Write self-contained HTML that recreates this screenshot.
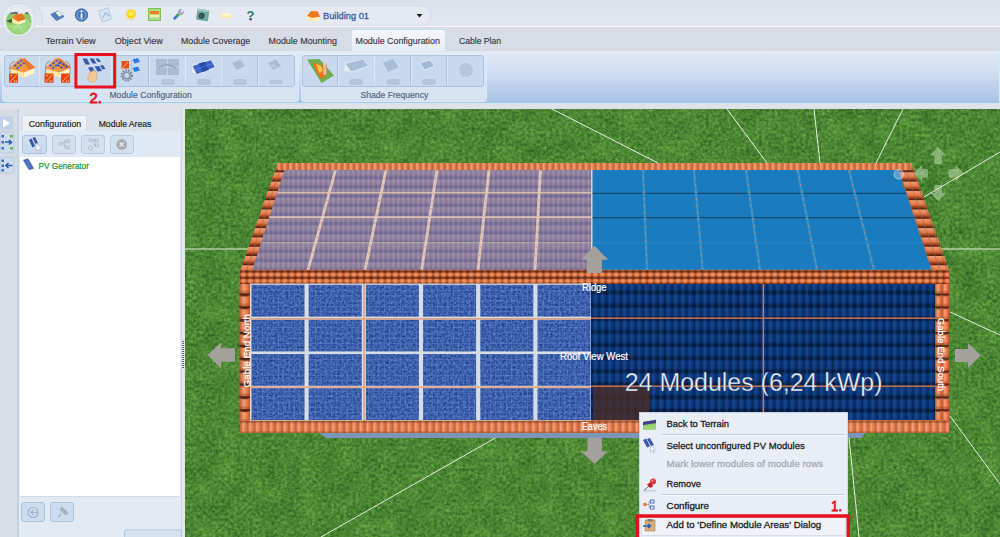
<!DOCTYPE html>
<html><head><meta charset="utf-8">
<style>
*{margin:0;padding:0;box-sizing:border-box}
html,body{width:1000px;height:537px;overflow:hidden;background:#dfe2e8;font-family:"Liberation Sans",sans-serif}
.a{position:absolute}
svg.a{overflow:visible}
#qat{left:0;top:0;width:1000px;height:26px;background:linear-gradient(#dbe0ea,#e2e6ef)}
#qatbar{left:28px;top:5px;width:405px;height:21px;background:linear-gradient(#e4e8f0,#e3e7f0);border:1px solid #d3d8e2;border-bottom:none;border-radius:0 11px 0 0}
#qatline{left:0;top:26px;width:1000px;height:1px;background:#f5f7fa}
#tabrow{left:0;top:27px;width:1000px;height:24px;background:#d8dce5}
.tab{position:absolute;top:36px;font-size:9.2px;color:#3c3c46;white-space:nowrap;letter-spacing:0}
#acttab{left:351px;top:28.5px;width:95px;height:23px;background:linear-gradient(#f4f7fb,#e6edf6);border:1px solid #c5e2f2;border-bottom:none;border-radius:3px 3px 0 0}
#ribbon{left:0;top:51px;width:1000px;height:53px;background:linear-gradient(#e3ecf7,#cddcf0 45%,#a7c2e6);border-right:1px solid #c8f0fa}
#ribline{left:0;top:102px;width:1000px;height:2px;background:linear-gradient(#afc6e2 0 50%,#c8eaf6 50% 100%)}
.grp{position:absolute;top:51px;height:51px;background:linear-gradient(#e2ebf6,#d6e2f1);border:1px solid #dde8f4;border-radius:3px}
.bgrp{position:absolute;top:55px;height:31.5px;background:#c9d9ee;border:1px solid #a8c2e2;border-radius:3px}
.div{position:absolute;top:56px;width:1.5px;height:29.5px;background:#a9c2e1;border-right:1px solid #dbe7f4}
.glabel{position:absolute;top:90px;font-size:9.2px;color:#5a6a80;white-space:nowrap}
.pill{position:absolute;width:14px;height:6px;border-radius:3px;background:#b5c6da}
.menu{font-size:9.6px;color:#1e1e28;white-space:nowrap;position:absolute;left:666.5px}
</style></head><body>

<div id="qat" class="a"></div>
<svg class="a" style="left:0;top:0" width="440" height="27" viewBox="0 0 440 27"><path d="M37.7 5.5 L421.5 5.5 A10.6 10.3 0 0 1 421.5 26 L41.8 26 A24 24 0 0 0 37.7 5.5Z" fill="#e5e9f1" stroke="#d2d7e0" stroke-width="0.9"/></svg>
<div id="qatline" class="a"></div>
<div id="tabrow" class="a"></div>
<!-- app button -->
<svg class="a" style="left:0;top:0" width="40" height="40" viewBox="0 0 40 40">
 <defs><clipPath id="disc"><path d="M6.2 22 A12.6 12.6 0 0 0 31.4 22 A12.6 12.6 0 0 0 29.5 14.2 L8 14.2 A12.6 12.6 0 0 0 6.2 22Z"/></clipPath>
 <radialGradient id="discg" cx="0.5" cy="0.6" r="0.6"><stop offset="0" stop-color="#a6dc88"/><stop offset="1" stop-color="#7cc45a"/></radialGradient></defs>
 <circle cx="18.6" cy="20.1" r="16.8" fill="#e5e9f0" stroke="#d0d6de" stroke-width="0.9"/>
 <path d="M8.5 15 Q10 11.5 13 12.3 Q16 11 18 12.5 L18 14.5 L8.5 14.5Z" fill="#4f5a58" opacity="0.85"/>
 <path d="M24.5 14.5 Q25.5 11.5 27.5 12.2 Q29 13 29.2 14.5Z" fill="#4f5a58" opacity="0.85"/>
 <g clip-path="url(#disc)">
  <rect x="0" y="10" width="40" height="30" fill="url(#discg)"/>
  <g stroke="#d4f0c4" stroke-width="0.6" fill="none" opacity="0.8"><path d="M5 25 Q18 30 33 23"/><path d="M10 33 L18 24 L24 34"/><path d="M24 17 L31 26"/></g>
 </g>
 <polygon points="6.2,21 11.8,18.8 12.4,22.8 9.6,22.6" fill="#2e4a26" opacity="0.85"/>
 <polygon points="11.8,18 14.9,14.9 18.2,21.4 18,24.4 12.4,22.8" fill="#fbeab0"/>
 <polygon points="18.2,21.4 25.5,19.1 25,22.5 18,24.4" fill="#fff4cc"/>
 <polygon points="11.8,18 14.9,14.9 21.9,13.5 25.5,19.1 18.2,21.4" fill="#ee8228"/>
 <polygon points="14.9,14.9 21.9,13.5 25.5,19.1 18.2,21.4" fill="#e87420"/>
</svg>
<!-- QAT icons -->
<svg class="a" style="left:0;top:0" width="440" height="27" viewBox="0 0 440 27">
 <polygon points="50.8,14 58,10.5 64,16 56.5,20" fill="#4d7cc0"/>
 <polygon points="50.8,14 56.5,20 56.5,21 50.8,15" fill="#2e5590"/>
 <polygon points="56.5,20 64,16 64,17 56.5,21" fill="#3a68a8"/>
 <polygon points="55.5,12.5 58.5,11 62.5,15 59.2,16.8" fill="#eef4dc"/>
 <polygon points="52.5,14 54.5,13 56,14.5 54,15.5" fill="#6a7a8a"/>
 <circle cx="81.5" cy="15" r="6.2" fill="#4577bb" stroke="#2f5a98" stroke-width="0.8"/>
 <circle cx="81.5" cy="15" r="4.6" fill="none" stroke="#a9c4e6" stroke-width="0.7"/>
 <rect x="80.7" y="13.5" width="1.7" height="5" fill="#fff"/><circle cx="81.5" cy="11.5" r="1" fill="#fff"/>
 <g transform="translate(105,15) rotate(-20)"><rect x="-5" y="-6" width="10" height="12" fill="#d6e3ef" stroke="#b4c7da" stroke-width="0.8"/><path d="M-3 2 L1 -2 L4 3" stroke="#9ab6d1" fill="none"/></g>
 <g fill="#f0d040"><circle cx="126" cy="12" r="0.6"/><circle cx="125.5" cy="14.5" r="0.6"/><circle cx="126" cy="17" r="0.6"/><circle cx="127.5" cy="19" r="0.6"/><circle cx="130" cy="20.2" r="0.6"/><circle cx="132.5" cy="20" r="0.6"/><circle cx="134.5" cy="19.5" r="0.6"/></g>
 <circle cx="131.2" cy="14" r="4.6" fill="#fbd20c"/><circle cx="131.2" cy="13.5" r="2.8" fill="#ffe84a"/>
 <rect x="148" y="8" width="13" height="13" fill="#7cc257"/><rect x="149" y="9" width="11" height="11" fill="#a9dc8c"/>
 <rect x="150" y="11" width="9" height="3.5" fill="#ee7a2a"/><rect x="150" y="14.5" width="9" height="2.8" fill="#fbf0b0"/>
 <g transform="translate(178,15) rotate(45)"><rect x="-1.3" y="-1" width="2.6" height="7" rx="1" fill="#3a7ad0"/><rect x="-1.3" y="-2" width="2.6" height="4" fill="#4a9a60"/><circle cx="0" cy="-4" r="3" fill="#a8adb5"/><rect x="-1" y="-7.5" width="2" height="3" fill="#e3e7f0"/></g>
 <g transform="translate(202.7,15) rotate(8)"><rect x="-6" y="-5.5" width="12" height="11" rx="1" fill="#6fa89e"/><rect x="-6" y="-5.5" width="12" height="2" fill="#9fd0c4"/><circle cx="-1" cy="1" r="3" fill="#2a4a4a"/><circle cx="-1" cy="1" r="1.3" fill="#567"/></g>
 <g transform="translate(226,15.8)"><polygon points="-6,-1 -2,-3.2 6,-1.5 6,1.5 2,3 -6,1" fill="#fbeaa8"/><polygon points="-6,-1 -2,-3.2 6,-1.5 2,0.5" fill="#fff6d0"/></g>
 <text x="246.5" y="20" font-size="13" font-weight="bold" fill="#2d7a6a" font-family="Liberation Sans">?</text>
 <circle cx="250.8" cy="19.3" r="1.2" fill="#2a5ac8"/>
 <g transform="translate(313,16)"><polygon points="-6,0 -2,-5 5,-4.5 7,1 -1,2" fill="#ee7a22"/><polygon points="-6,0 -1,2 0,5.5 -5,4" fill="#fbeaa0"/><polygon points="-1,2 7,1 6.5,4.5 0,5.5" fill="#fff2c0"/></g>
 <text x="323" y="19.2" font-size="9.8" fill="#3a5a9e" stroke="#3a5a9e" stroke-width="0.3" font-family="Liberation Sans" textLength="46" lengthAdjust="spacingAndGlyphs">Building 01</text>
 <polygon points="416.5,14 422.5,14 419.5,17.5" fill="#1a1a1a"/>
</svg>
<!-- tabs -->
<div id="acttab" class="a"></div>
<svg class="a" style="left:0;top:0" width="1000" height="60" viewBox="0 0 1000 60" font-family="Liberation Sans" font-size="9" fill="#383844" stroke="#383844" stroke-width="0.15">
 <text x="45.5" y="44.4" textLength="50.2" lengthAdjust="spacingAndGlyphs">Terrain View</text>
 <text x="114.8" y="44.4" textLength="48.1" lengthAdjust="spacingAndGlyphs">Object View</text>
 <text x="181" y="44.4" textLength="69.2" lengthAdjust="spacingAndGlyphs">Module Coverage</text>
 <text x="268.5" y="44.4" textLength="68.4" lengthAdjust="spacingAndGlyphs">Module Mounting</text>
 <text x="355.5" y="44.4" textLength="84.4" lengthAdjust="spacingAndGlyphs">Module Configuration</text>
 <text x="459" y="44.4" textLength="42.1" lengthAdjust="spacingAndGlyphs">Cable Plan</text>
</svg>
<!-- ribbon -->
<div id="ribbon" class="a"></div>
<div id="ribline" class="a"></div>
<div class="grp" style="left:2px;width:297px"></div>
<div class="grp" style="left:300.5px;width:186.5px"></div>
<div class="bgrp" style="left:4.2px;width:290.5px"></div>
<div class="bgrp" style="left:302.3px;width:181.5px"></div>
<div class="div" style="left:38.8px"></div>
<div class="div" style="left:73.5px"></div>
<div class="div" style="left:110.8px"></div>
<div class="div" style="left:148.4px"></div>
<div class="div" style="left:184.7px"></div>
<div class="div" style="left:220.8px"></div>
<div class="div" style="left:257px"></div>
<div class="div" style="left:337px"></div>
<div class="div" style="left:373.5px"></div>
<div class="div" style="left:410.2px"></div>
<div class="div" style="left:446.3px"></div>

<svg class="a" style="left:0;top:0" width="500" height="110" viewBox="0 0 500 110" font-family="Liberation Sans" font-size="9" fill="#52607a" stroke="#52607a" stroke-width="0.15">
 <text x="109.4" y="98" textLength="82.4" lengthAdjust="spacingAndGlyphs">Module Configuration</text>
 <text x="360.6" y="98" textLength="67.6" lengthAdjust="spacingAndGlyphs">Shade Frequency</text>
</svg>
<div class="pill" style="left:160.5px;top:78.5px"></div>
<div class="pill" style="left:196.5px;top:78.5px"></div>
<div class="pill" style="left:232.5px;top:78.5px"></div>
<div class="pill" style="left:269px;top:78.5px;height:4px;top:79.5px"></div>
<div class="pill" style="left:349px;top:78.5px"></div>
<div class="pill" style="left:385.5px;top:78.5px"></div>
<div class="pill" style="left:422px;top:78.5px"></div>
<svg class="a" style="left:0;top:0" width="500" height="110" viewBox="0 0 500 110">
 <!-- icon1 house -->
 <g id="house1">
  <polygon points="11,68 24,72 24,77.5 11,73.5" fill="#fbe7a4"/>
  <polygon points="24,72 34.5,67.5 34.5,73 24,77.5" fill="#fff4cc"/>
  <polygon points="9,68.5 20,58.3 24.5,58.3 35.5,67.8 24,72.5" fill="#f49648"/>
  <polygon points="24.5,58.3 35.5,67.8 28.5,69.6 22.5,59.5" fill="#e87a30"/>
  <path d="M10 74 L10 66 Q11 61.5 15 61" stroke="#80838a" stroke-width="0.8" fill="none"/>
  <rect x="9" y="73.5" width="9" height="9.2" fill="#e2480f"/>
  <path d="M10 82 L17 74.5" stroke="#ffd8c0" stroke-width="0.7"/>
  <rect x="10.3" y="75" width="2" height="0.7" fill="#ffd8c0"/><rect x="14" y="80.5" width="1.2" height="1" fill="#ffd8c0"/><rect x="15.8" y="80.5" width="1.2" height="1" fill="#ffd8c0"/>
 </g>
 <g fill="#3a64d0">
  <polygon points="13.5,65.5 15.5,64 16.8,65.5 14.8,67"/><polygon points="16.5,63 18.5,61.5 19.8,63 17.8,64.5"/><polygon points="19.5,60.5 21.5,59.5 22.8,61 20.8,62"/>
  <polygon points="16,68 18,66.5 19.3,68 17.3,69.5"/><polygon points="19,65.5 21,64 22.3,65.5 20.3,67"/><polygon points="22,63 24,62 25.3,63.5 23.3,64.5"/>
 </g>
 <use href="#house1" x="35.5"/>
 <g fill="#3a64d0" transform="translate(35.5,0)">
  <polygon points="13.5,65.5 15.5,64 16.8,65.5 14.8,67"/><polygon points="16.5,63 18.5,61.5 19.8,63 17.8,64.5"/><polygon points="19.5,60.5 21.5,59.5 22.8,61 20.8,62"/>
  <polygon points="16,68 18,66.5 19.3,68 17.3,69.5"/><polygon points="19,65.5 21,64 22.3,65.5 20.3,67"/><polygon points="22,63 24,62 25.3,63.5 23.3,64.5"/>
 </g>
 <g fill="#2f54b8"><polygon points="60,61 62,62.5 61,64 59,62.5"/><polygon points="63,63 65,64.5 64,66 62,64.5"/><polygon points="66,65 68,66.5 67,68 65,66.5"/><polygon points="58,64 60,65.5 59,67 57,65.5"/><polygon points="61,66 63,67.5 62,69 60,67.5"/></g>
 <path d="M70 74 L70 66 Q69 61.5 65 61" stroke="#80838a" stroke-width="0.8" fill="none"/>
 <rect x="61" y="73.5" width="9" height="9.2" fill="#e2480f"/>
 <path d="M62 82 L69 74.5" stroke="#ffd8c0" stroke-width="0.7"/>
 <rect x="66" y="80.5" width="1.2" height="1" fill="#ffd8c0"/><rect x="67.8" y="80.5" width="1.2" height="1" fill="#ffd8c0"/>
 <!-- icon3 panels + hand -->
 <g fill="#3658a8">
  <polygon points="82.5,58.5 87,58.5 90,64.5 85.5,64.5"/><polygon points="89.5,58.5 93.5,58.5 96.5,63.5 92.5,63.5"/><polygon points="95.5,58.5 98.5,58.5 101,62 98,62"/>
  <polygon points="88,67.5 92.5,67 95.5,72.5 91,73"/><polygon points="94.5,66.5 99,66 102,71 97.5,71.5"/><polygon points="100,65.5 103,65 105.5,69 102.5,69.5"/>
 </g>
 <path d="M88 80 Q87 76 89 75 L90 72 Q91 71 92 72 L92.5 70.5 Q93.5 70 94 71 L95 71.5 Q96 71 96.5 72 L97 77 Q97 82 93 82 Q89.5 82 88 80Z" fill="#f3c896" stroke="#c89a66" stroke-width="0.5"/>
 <!-- icon4 -->
 <rect x="121.5" y="61" width="7.5" height="7.5" fill="#e84e14"/><path d="M122.5 68 L128 62" stroke="#fbd0b0" stroke-width="0.7"/>
 <path d="M129 64.5 L132 64.5 M131.5 60 L131.5 70" stroke="#b8bcc4" stroke-width="0.8"/>
 <polygon points="132.5,59.5 138,58 140,62 134.5,63.5" fill="#2f7ae0"/>
 <polygon points="132.5,68 138,66.5 140,70.5 134.5,72" fill="#2f7ae0"/>
 <circle cx="126.8" cy="75.5" r="5" fill="none" stroke="#7a8a98" stroke-width="2.4" stroke-dasharray="1.6 1.1"/>
 <circle cx="126.8" cy="75.5" r="3.2" fill="none" stroke="#8a9aa6" stroke-width="1.6"/>
 <!-- icon5 faded -->
 <rect x="156" y="59" width="23" height="16" fill="#a9bdd2"/><rect x="167" y="59" width="1" height="16" fill="#c8d6e6"/><rect x="156" y="66.5" width="23" height="1" fill="#c8d6e6"/>
 <path d="M158 68 Q167 62 176 68" stroke="#8fa6c0" stroke-width="1.3" fill="none"/>
 <!-- icon6 solar panel on stand -->
 <polygon points="191.3,65.7 196.6,74.8 191.3,72.5" fill="#eef2f6" stroke="#aab6c4" stroke-width="0.5"/>
 <polygon points="192,65.7 211,59.6 215.6,67.2 196.6,74.8" fill="#3f64c8" stroke="#f4f6fa" stroke-width="0.9"/>
 <polygon points="198.5,63.6 204.5,61.7 209,69.8 202.5,72.2" fill="#2a4aa8"/>
 <path d="M194.3 69.7 L213.3 63.4" stroke="#6f8ee0" stroke-width="0.5"/>
 <!-- icon7, icon8 faded -->
 <polygon points="232,63 240,59.5 245,66 237,70" fill="#a9bdd2"/>
 <polygon points="268,63 276,59.5 281,66 273,70" fill="#a9bdd2"/>
 <text x="270.5" y="67" font-size="5" fill="#d6e2ee" transform="rotate(-20 274 65)">%</text>
 <!-- shade freq icons -->
 <polygon points="307,59.5 319.5,59 334,75.5 321.5,83" fill="#6fae4e"/>
 <path d="M313 63 Q322 62 326 73 Q324 78 321 79 Q315 70 313 63Z" fill="#f07018"/>
 <path d="M316 64 Q321 64 323 70 Q321 73 319 73Z" fill="#fbc040"/>
 <rect x="323" y="64" width="3.8" height="11" fill="#eebb90" stroke="#c07850" stroke-width="0.5"/>
 <ellipse cx="324.9" cy="64" rx="1.9" ry="0.8" fill="#f8d8b8"/>
 <polygon points="345,63.5 363,59 368.5,66 351,72" fill="#a7bcd6" stroke="#eef3f8" stroke-width="0.7"/>
 <polygon points="345,63.5 351,72 344,71" fill="#e4ecf4"/>
 <polygon points="383,63 393,59 398.5,67 388,72" fill="#a7bcd6"/>
 <polygon points="420,63 430,60 434.5,66 424.5,70" fill="#a2b8d4" stroke="#eef3f8" stroke-width="0.7"/>
 <circle cx="466" cy="70" r="7" fill="#b3c6de"/>
 <circle cx="466" cy="70" r="9.5" fill="none" stroke="#c3d2e4" stroke-width="0.8" stroke-dasharray="0.8 2"/>
 <!-- red box 2 -->
 <rect x="75.9" y="54.5" width="38.8" height="32.5" fill="none" stroke="#e8101c" stroke-width="3"/>
 <text x="89.6" y="102.6" font-size="15.5" fill="#e8101c" stroke="#e8101c" stroke-width="0.8" font-family="Liberation Sans" textLength="12.4" lengthAdjust="spacingAndGlyphs">2.</text>
</svg>

<!-- left strip -->
<div class="a" style="left:0;top:109px;width:18px;height:428px;background:#d6dce4"></div>
<div class="a" style="left:17px;top:109px;width:2px;height:428px;background:#c4d2e2"></div>
<svg class="a" style="left:0;top:109px" width="19" height="70" viewBox="0 109 19 70">
 <rect x="0" y="116.5" width="13" height="13" fill="#c0d2ea"/>
 <polygon points="3,119 3,127.5 10,123.2" fill="#fff"/>
 <rect x="0" y="132" width="14" height="21" rx="2" fill="#cfdcec" stroke="#b4c8e0" stroke-width="0.8"/>
 <g fill="#3a6ac0"><rect x="1.5" y="135" width="2.5" height="2.5"/><rect x="1.5" y="141" width="2.5" height="2.5"/><rect x="1.5" y="147" width="2.5" height="2.5"/></g>
 <g fill="#5cb84a"><rect x="10" y="135" width="3" height="2.5"/><rect x="10" y="147" width="3" height="2.5"/></g>
 <path d="M5 142 L11 142 M9 140 L11.5 142.2 L9 144.5" stroke="#2a5ab0" stroke-width="1.6" fill="none"/>
 <rect x="0" y="157" width="14" height="16" rx="2" fill="#cfdcec" stroke="#b4c8e0" stroke-width="0.8"/>
 <g fill="#3a6ac0"><rect x="1.5" y="159.5" width="2.5" height="2.5"/><rect x="1.5" y="164.5" width="2.5" height="2.5"/><rect x="1.5" y="169" width="2.5" height="2.5"/></g>
 <path d="M12.5 165.5 L6 165.5 M8.5 163 L6 165.5 L8.5 168" stroke="#2a5ab0" stroke-width="1.6" fill="none"/>
</svg>
<!-- left panel -->
<div class="a" style="left:19px;top:109px;width:162px;height:22px;background:#dde3ea"></div>
<div class="a" style="left:22.4px;top:115px;width:64.6px;height:16px;background:linear-gradient(#f2f5f9,#e9eef5);border:1px solid #d3d9e1;border-bottom:none;border-radius:2px 2px 0 0"></div>

<div class="a" style="left:158px;top:118px;width:1px;height:12px;background:#e6eaf0"></div>
<div class="a" style="left:19px;top:131px;width:162px;height:406px;background:#e3eaf4"></div>
<div class="a" style="left:20px;top:156.5px;width:160px;height:340px;background:#fff;border-bottom:1.5px solid #d3dae3"></div>
<div class="a" style="left:19px;top:131px;width:162px;height:25.5px;background:#e1e9f4"></div>
<div class="a" style="left:22.4px;top:134.5px;width:24.6px;height:19.8px;background:#cddcef;border:1px solid #a9c2e0;border-radius:3px"></div>
<div class="a" style="left:51.9px;top:134.5px;width:23.8px;height:19.8px;background:#d2e0f0;border:1px solid #b6cce6;border-radius:3px"></div>
<div class="a" style="left:81px;top:134.5px;width:23.5px;height:19.8px;background:#d2e0f0;border:1px solid #b6cce6;border-radius:3px"></div>
<div class="a" style="left:109.8px;top:134.5px;width:23.8px;height:19.8px;background:#d2e0f0;border:1px solid #b6cce6;border-radius:3px"></div>
<svg class="a" style="left:0;top:0" width="185" height="180" viewBox="0 0 185 180">
 <polygon points="29,140 31.5,138.5 35,146 32.5,147.5" fill="#34559c"/>
 <polygon points="32.5,138 35,137 38,143 35.5,144" fill="#34559c"/>
 <path d="M36 143 L36 151 L38 149.5 L39.5 152.5 L40.5 152 L39.2 149 L41.5 149 Z" fill="#fff" stroke="#8a96a6" stroke-width="0.5"/>
 <g stroke="#a8bad0" stroke-width="0.8" fill="none"><rect x="59.5" y="142.5" width="3" height="2.5"/><rect x="66" y="140" width="3" height="2.5"/><rect x="66" y="146" width="3" height="2.5"/><path d="M62.5 143.7 L64.5 143.7 L64.5 141.2 L66 141.2 M64.5 143.7 L64.5 147.2 L66 147.2"/></g>
 <g stroke="#a8bad0" stroke-width="0.8" fill="none"><rect x="89" y="139" width="3" height="2.5"/><rect x="95.5" y="139" width="3" height="2.5"/><rect x="95.5" y="144" width="3" height="2.5"/><path d="M92 140.2 L95.5 140.2 M94 140.2 L94 145.2 L95.5 145.2"/><circle cx="90.5" cy="148" r="2"/></g>
 <circle cx="121.7" cy="144.4" r="5.3" fill="#a8acb2"/>
 <path d="M119.6 142.3 L123.8 146.5 M123.8 142.3 L119.6 146.5" stroke="#e8eaee" stroke-width="1.3"/>
 <polygon points="23,160 28,158.5 34,168.5 29,170" fill="#3a5fae" stroke="#8ea6cc" stroke-width="0.6"/>
 <polygon points="24.5,161 27.5,160 32,167.5 29,168.5" fill="#4d78c8"/>
</svg>

<div class="a" style="left:19px;top:156.5px;width:162px;height:337.5px;background:transparent"></div>
<div class="a" style="left:181px;top:109px;width:4px;height:428px;background:#e3e7ed;border-left:1px solid #cfd6de"></div>

<svg class="a" style="left:0;top:100px" width="185" height="80" viewBox="0 100 185 80" font-family="Liberation Sans" font-size="9.2">
 <text x="28.7" y="127.4" textLength="52.6" lengthAdjust="spacingAndGlyphs" fill="#1e1e1e" stroke="#1e1e1e" stroke-width="0.18">Configuration</text>
 <text x="98.7" y="127.4" textLength="52.7" lengthAdjust="spacingAndGlyphs" fill="#1e1e1e" stroke="#1e1e1e" stroke-width="0.18">Module Areas</text>
 <text x="38.5" y="169.1" textLength="50.4" lengthAdjust="spacingAndGlyphs" fill="#12921e" stroke="#12921e" stroke-width="0.2">PV Generator</text>
</svg>
<div class="a" style="left:20.9px;top:502.4px;width:24.1px;height:19.8px;background:#cddcef;border:1px solid #a9c2e0;border-radius:3px"></div>
<div class="a" style="left:50.4px;top:502.4px;width:23.7px;height:19.8px;background:#cddcef;border:1px solid #a9c2e0;border-radius:3px"></div>
<svg class="a" style="left:0;top:490px" width="185" height="47" viewBox="0 490 185 47">
 <circle cx="33" cy="512.5" r="5" fill="none" stroke="#9fb4cc" stroke-width="1.2"/>
 <path d="M31 512.5 L38 512.5 M33.5 510 L31 512.5 L33.5 515" stroke="#9fb4cc" stroke-width="1.2" fill="none"/>
 <path d="M58 517 L61 514 M60 509 L66 515 M62 507.5 L67.5 513 L65 514 L61 510Z" stroke="#9fb4cc" stroke-width="1.5" fill="#9fb4cc"/>
 <rect x="124.5" y="529.8" width="57" height="9" rx="2" fill="#d5e1ef" stroke="#a9c2e0" stroke-width="0.9"/>
</svg>
<svg class="a" style="left:181px;top:340px" width="4" height="30" viewBox="0 0 4 30">
 <g fill="#202020"><rect x="1.5" y="1" width="1.2" height="1"/><rect x="1.5" y="3" width="1.2" height="1"/><rect x="1.5" y="5" width="1.2" height="1"/><rect x="1.5" y="7" width="1.2" height="1"/><rect x="1.5" y="9" width="1.2" height="1"/><rect x="1.5" y="11" width="1.2" height="1"/><rect x="1.5" y="13" width="1.2" height="1"/><rect x="1.5" y="15" width="1.2" height="1"/><rect x="1.5" y="17" width="1.2" height="1"/><rect x="1.5" y="19" width="1.2" height="1"/><rect x="1.5" y="21" width="1.2" height="1"/><rect x="1.5" y="23" width="1.2" height="1"/><rect x="1.5" y="25" width="1.2" height="1"/><rect x="1.5" y="27" width="1.2" height="1"/></g>
</svg>
<!-- 3D view -->
<svg class="a" style="left:0;top:0" width="1000" height="537" viewBox="0 0 1000 537">
<defs>
<filter id="grassf" x="0" y="0" width="100%" height="100%" color-interpolation-filters="sRGB">
 <feTurbulence type="fractalNoise" baseFrequency="0.32" numOctaves="3" seed="11" result="n1"/>
 <feTurbulence type="fractalNoise" baseFrequency="0.05" numOctaves="2" seed="4" result="n2"/>
 <feComposite in="n1" in2="n2" operator="arithmetic" k1="0" k2="0.7" k3="0.3" k4="0" result="n"/>
 <feColorMatrix in="n" type="matrix" values="0.42 0 0 0 0.0880  0.48 0 0 0 0.2894  0.25 0 0 0 0.0789  0 0 0 0 1" result="c"/>
 <feGaussianBlur in="c" stdDeviation="0.6"/>
</filter>
<filter id="panelf" x="0" y="0" width="100%" height="100%" color-interpolation-filters="sRGB">
 <feTurbulence type="fractalNoise" baseFrequency="0.45" numOctaves="2" seed="5" result="n"/>
 <feColorMatrix in="n" type="matrix" values="0.38 0 0 0 0.03  0.42 0 0 0 0.145  0.36 0 0 0 0.48  0 0 0 0 1" result="c"/>
 <feComposite in="c" in2="SourceAlpha" operator="in"/>
</filter>
<linearGradient id="topShade" x1="0" y1="0" x2="0" y2="1"><stop offset="0" stop-color="#4a1e0c" stop-opacity="0.55"/><stop offset="1" stop-color="#4a1e0c" stop-opacity="0"/></linearGradient>
<pattern id="pgrid" width="5.3" height="5.3" patternUnits="userSpaceOnUse" x="251.5" y="284.8">
 <rect x="0" y="0" width="5.3" height="0.7" fill="#7a9ad0" opacity="0.35"/>
 <rect x="0" y="0" width="0.7" height="5.3" fill="#7a9ad0" opacity="0.35"/>
</pattern>
<radialGradient id="tileBlob" cx="0.5" cy="0.45" r="0.6">
 <stop offset="0" stop-color="#f5a577"/><stop offset="0.55" stop-color="#e07646"/><stop offset="1" stop-color="#a84a24"/>
</radialGradient>
<pattern id="ridge" width="6.9" height="6.3" patternUnits="userSpaceOnUse" x="240" y="271.6">
 <rect width="6.9" height="6.3" fill="#6a3018"/>
 <ellipse cx="3.45" cy="3.1" rx="3.5" ry="2.7" fill="url(#tileBlob)"/>
</pattern>
<linearGradient id="tileStripe" x1="0" y1="0" x2="1" y2="0">
 <stop offset="0" stop-color="#b9592e"/><stop offset="0.35" stop-color="#f3a37a"/><stop offset="0.7" stop-color="#e27a4c"/><stop offset="1" stop-color="#c4612f"/>
</linearGradient>
<pattern id="stripesTop" width="6.03" height="20" patternUnits="userSpaceOnUse" x="276">
 <rect width="6.03" height="20" fill="url(#tileStripe)"/>
</pattern>
<pattern id="stripes" width="6.9" height="20" patternUnits="userSpaceOnUse" x="240.7">
 <rect width="6.9" height="20" fill="url(#tileStripe)"/>
</pattern>
<linearGradient id="sideTile" x1="0" y1="0" x2="0" y2="1">
 <stop offset="0" stop-color="#f0a078"/><stop offset="0.45" stop-color="#e27a4b"/><stop offset="0.7" stop-color="#a84c26"/><stop offset="1" stop-color="#3a180c"/>
</linearGradient>
<pattern id="sideL" width="7" height="9.3" patternUnits="userSpaceOnUse" x="0" y="163" patternTransform="skewX(-18.4)">
 <rect width="7" height="9.3" fill="url(#sideTile)"/>
 <rect width="1" height="9.3" fill="#b4552c" opacity="0.6"/>
</pattern>
<pattern id="sideR" width="7" height="9.3" patternUnits="userSpaceOnUse" x="0" y="163" patternTransform="skewX(18.9)">
 <rect width="7" height="9.3" fill="url(#sideTile)"/>
 <rect width="1" height="9.3" fill="#b4552c" opacity="0.6"/>
</pattern>
<linearGradient id="vertTile" x1="0" y1="0" x2="0" y2="1">
 <stop offset="0" stop-color="#3a180c"/><stop offset="0.2" stop-color="#b5552c"/><stop offset="0.5" stop-color="#f0a078"/><stop offset="1" stop-color="#de7649"/>
</linearGradient>
<linearGradient id="vertH" x1="0" y1="0" x2="1" y2="0">
 <stop offset="0" stop-color="#b6552a"/><stop offset="0.4" stop-color="#f2a078"/><stop offset="0.75" stop-color="#e27848"/><stop offset="1" stop-color="#b9572c"/>
</linearGradient>
<pattern id="vert" width="10.5" height="12.85" patternUnits="userSpaceOnUse" x="239.5" y="280.6">
 <rect width="10.5" height="12.85" fill="url(#vertH)"/>
 <path d="M0 0 L10.5 0 L10.5 1.8 Q5.25 4.2 0 1.8Z" fill="#3e1a0c" opacity="0.9"/>
 <rect y="10.3" width="10.5" height="2.55" fill="#a04a22" opacity="0.5"/>
</pattern>
<pattern id="vertR" width="7" height="12.85" patternUnits="userSpaceOnUse" x="935" y="280.6">
 <rect width="7" height="12.7" fill="url(#vertH)"/>
 <path d="M0 0 L7 0 L7 1.5 Q3.5 4 0 1.5Z" fill="#3e1a0c" opacity="0.85"/>
 <rect y="10.5" width="7" height="2.2" fill="#a04a22" opacity="0.5"/>
</pattern>
<linearGradient id="purpBand" x1="0" y1="0" x2="0" y2="1">
 <stop offset="0" stop-color="#978aa4"/><stop offset="0.5" stop-color="#8e7f9c"/><stop offset="0.72" stop-color="#6e6a96"/><stop offset="0.88" stop-color="#716c96"/><stop offset="1" stop-color="#8f84a2"/>
</linearGradient>
<pattern id="purp" width="5" height="9.2" patternUnits="userSpaceOnUse" x="0" y="170.6">
 <rect width="5" height="9.2" fill="url(#purpBand)"/>
 <rect x="0" width="1.6" height="9.2" fill="#7a5a72" opacity="0.25"/>
 <rect x="2.6" width="1.6" height="9.2" fill="#b4a8c4" opacity="0.25"/>
</pattern>
<linearGradient id="navyBand" x1="0" y1="0" x2="0" y2="1">
 <stop offset="0" stop-color="#0c3a80"/><stop offset="0.55" stop-color="#0b377a"/><stop offset="0.72" stop-color="#06224e"/><stop offset="0.85" stop-color="#051a3e"/><stop offset="1" stop-color="#0a2e66"/>
</linearGradient>
<pattern id="navy" width="7.3" height="13.1" patternUnits="userSpaceOnUse" x="591" y="282">
 <rect width="7.3" height="13.1" fill="url(#navyBand)"/>
 <rect x="0" width="1.8" height="13.1" fill="#031638" opacity="0.45"/>
 <rect x="3.2" width="2" height="13.1" fill="#2a64b8" opacity="0.3"/>
</pattern>
<pattern id="cells" width="4" height="4" patternUnits="userSpaceOnUse">
 <rect width="4" height="4" fill="#3d63b3"/>
 <rect width="1" height="4" fill="#34539c"/>
 <rect width="4" height="1" fill="#4a6fbd"/>
</pattern>
</defs>
<rect x="185" y="109" width="815" height="428" fill="#4f8f2e" filter="url(#grassf)"/>
<line x1="185" y1="249" x2="248" y2="249" stroke="#e6eee0" stroke-width="1"/>
<line x1="552" y1="109" x2="658" y2="163" stroke="#e6eee0" stroke-width="1"/>
<line x1="727" y1="109" x2="767" y2="163" stroke="#e6eee0" stroke-width="1"/>
<line x1="814" y1="109" x2="820" y2="163" stroke="#e6eee0" stroke-width="1"/>
<line x1="903" y1="109" x2="876" y2="163" stroke="#e6eee0" stroke-width="1"/>
<line x1="1000" y1="152" x2="924" y2="197" stroke="#e6eee0" stroke-width="1"/>
<line x1="941" y1="249" x2="1000" y2="249" stroke="#e6eee0" stroke-width="1"/>
<line x1="950" y1="312" x2="1000" y2="335" stroke="#e6eee0" stroke-width="1"/>
<line x1="950" y1="416" x2="1000" y2="484" stroke="#e6eee0" stroke-width="1"/>
<line x1="497" y1="437" x2="321" y2="537" stroke="#e6eee0" stroke-width="1"/>
<line x1="849" y1="437" x2="859" y2="537" stroke="#e6eee0" stroke-width="1"/>
<polygon points="318,432.5 866,432.5 861,438 326,438" fill="#7b96b8"/>
<polygon points="277.8,163 911.2,163 949,270.5 240.5,270.5" fill="#e27a4c"/>
<polygon points="277.8,163 285,163 284.5,170 252.4,270 240.5,270.5" fill="url(#sideL)"/>
<polygon points="911.2,163 898,163 898.5,170 931.5,270 949,270.5" fill="url(#sideR)"/>
<rect x="277.8" y="163" width="633.4" height="7" fill="url(#stripesTop)"/>
<rect x="277.8" y="163" width="633.4" height="7" fill="url(#bandV)"/>
<rect x="240" y="270" width="709" height="163" fill="#e27a4c"/>
<rect x="239.5" y="284" width="11.5" height="136" fill="url(#vert)"/>
<rect x="935" y="284" width="14" height="136" fill="url(#vertR)"/>
<rect x="240" y="270" width="709" height="14" fill="url(#ridge)"/>
<rect x="240" y="420.8" width="709" height="12.2" fill="url(#stripes)"/>
<rect x="240" y="420.8" width="709" height="3" fill="url(#topShade)"/>
<rect x="240" y="431.5" width="709" height="1.5" fill="#a4512a" opacity="0.6"/>
<polygon points="284.5,170 591,170 591,269.8 252.4,269.8" fill="url(#purp)"/>
<line x1="277.1452" y1="192.7" x2="591" y2="192.7" stroke="#e2c0b0" stroke-width="1.6" opacity="0.9"/>
<line x1="269.2072" y1="217.2" x2="591" y2="217.2" stroke="#e6c6b6" stroke-width="1.8" opacity="0.9"/>
<line x1="260.9128" y1="242.8" x2="591" y2="242.8" stroke="#b9aaa4" stroke-width="1.4" opacity="0.9"/>
<line x1="335.5" y1="170" x2="308" y2="270" stroke="#eed4c4" stroke-width="2.8" opacity="0.85"/>
<line x1="335.5" y1="170" x2="308" y2="270" stroke="#d07040" stroke-width="0.9" stroke-dasharray="1.2 6.5" opacity="0.8"/>
<line x1="386" y1="170" x2="365" y2="270" stroke="#eed4c4" stroke-width="2.8" opacity="0.85"/>
<line x1="386" y1="170" x2="365" y2="270" stroke="#d07040" stroke-width="0.9" stroke-dasharray="1.2 6.5" opacity="0.8"/>
<line x1="437" y1="170" x2="421.6" y2="270" stroke="#eed4c4" stroke-width="2.8" opacity="0.85"/>
<line x1="437" y1="170" x2="421.6" y2="270" stroke="#d07040" stroke-width="0.9" stroke-dasharray="1.2 6.5" opacity="0.8"/>
<line x1="489" y1="170" x2="478" y2="270" stroke="#eed4c4" stroke-width="2.8" opacity="0.85"/>
<line x1="489" y1="170" x2="478" y2="270" stroke="#d07040" stroke-width="0.9" stroke-dasharray="1.2 6.5" opacity="0.8"/>
<line x1="540.5" y1="170" x2="535" y2="270" stroke="#eed4c4" stroke-width="2.8" opacity="0.85"/>
<line x1="540.5" y1="170" x2="535" y2="270" stroke="#d07040" stroke-width="0.9" stroke-dasharray="1.2 6.5" opacity="0.8"/>
<polygon points="591,170 898.5,170 931.5,269.8 591,269.8" fill="#1a7cbf"/>
<line x1="591" y1="193.3" x2="906.3" y2="193.3" stroke="#17496f" stroke-width="1.3"/>
<line x1="591" y1="217.6" x2="914.3" y2="217.6" stroke="#17496f" stroke-width="1.3"/>
<line x1="591" y1="243" x2="922.8" y2="243" stroke="#2a88c6" stroke-width="1"/>
<line x1="643" y1="170" x2="647" y2="270" stroke="#3390cc" stroke-width="2.5"/>
<line x1="643" y1="170" x2="647" y2="270" stroke="#e08a50" stroke-width="0.9" stroke-dasharray="2 5"/>
<line x1="694" y1="170" x2="702.7" y2="270" stroke="#3390cc" stroke-width="2.5"/>
<line x1="694" y1="170" x2="702.7" y2="270" stroke="#e08a50" stroke-width="0.9" stroke-dasharray="2 5"/>
<line x1="746" y1="170" x2="760" y2="270" stroke="#3390cc" stroke-width="2.5"/>
<line x1="746" y1="170" x2="760" y2="270" stroke="#e08a50" stroke-width="0.9" stroke-dasharray="2 5"/>
<line x1="797.6" y1="170" x2="817" y2="270" stroke="#3390cc" stroke-width="2.5"/>
<line x1="797.6" y1="170" x2="817" y2="270" stroke="#e08a50" stroke-width="0.9" stroke-dasharray="2 5"/>
<line x1="849" y1="170" x2="874" y2="270" stroke="#3390cc" stroke-width="2.5"/>
<line x1="849" y1="170" x2="874" y2="270" stroke="#e08a50" stroke-width="0.9" stroke-dasharray="2 5"/>
<rect x="591" y="170" width="1.5" height="100" fill="#e8d0c0"/>
<rect x="250" y="283.5" width="341" height="137" fill="#d6dde5"/>
<g filter="url(#panelf)">
<rect x="251.5" y="284.8" width="53.0" height="31.8" fill="#3b62b6"/>
<rect x="251.5" y="319.6" width="53.0" height="31.8" fill="#3b62b6"/>
<rect x="251.5" y="354.0" width="53.0" height="31.8" fill="#3b62b6"/>
<rect x="251.5" y="388.2" width="53.0" height="31.8" fill="#3b62b6"/>
<rect x="308.7" y="284.8" width="53.0" height="31.8" fill="#3b62b6"/>
<rect x="308.7" y="319.6" width="53.0" height="31.8" fill="#3b62b6"/>
<rect x="308.7" y="354.0" width="53.0" height="31.8" fill="#3b62b6"/>
<rect x="308.7" y="388.2" width="53.0" height="31.8" fill="#3b62b6"/>
<rect x="365.9" y="284.8" width="53.0" height="31.8" fill="#3b62b6"/>
<rect x="365.9" y="319.6" width="53.0" height="31.8" fill="#3b62b6"/>
<rect x="365.9" y="354.0" width="53.0" height="31.8" fill="#3b62b6"/>
<rect x="365.9" y="388.2" width="53.0" height="31.8" fill="#3b62b6"/>
<rect x="423.1" y="284.8" width="53.0" height="31.8" fill="#3b62b6"/>
<rect x="423.1" y="319.6" width="53.0" height="31.8" fill="#3b62b6"/>
<rect x="423.1" y="354.0" width="53.0" height="31.8" fill="#3b62b6"/>
<rect x="423.1" y="388.2" width="53.0" height="31.8" fill="#3b62b6"/>
<rect x="480.3" y="284.8" width="53.0" height="31.8" fill="#3b62b6"/>
<rect x="480.3" y="319.6" width="53.0" height="31.8" fill="#3b62b6"/>
<rect x="480.3" y="354.0" width="53.0" height="31.8" fill="#3b62b6"/>
<rect x="480.3" y="388.2" width="53.0" height="31.8" fill="#3b62b6"/>
<rect x="537.5" y="284.8" width="53.0" height="31.8" fill="#3b62b6"/>
<rect x="537.5" y="319.6" width="53.0" height="31.8" fill="#3b62b6"/>
<rect x="537.5" y="354.0" width="53.0" height="31.8" fill="#3b62b6"/>
<rect x="537.5" y="388.2" width="53.0" height="31.8" fill="#3b62b6"/>
</g>
<rect x="251.5" y="284.8" width="53.0" height="31.8" fill="url(#pgrid)"/>
<rect x="251.5" y="319.6" width="53.0" height="31.8" fill="url(#pgrid)"/>
<rect x="251.5" y="354.0" width="53.0" height="31.8" fill="url(#pgrid)"/>
<rect x="251.5" y="388.2" width="53.0" height="31.8" fill="url(#pgrid)"/>
<rect x="308.7" y="284.8" width="53.0" height="31.8" fill="url(#pgrid)"/>
<rect x="308.7" y="319.6" width="53.0" height="31.8" fill="url(#pgrid)"/>
<rect x="308.7" y="354.0" width="53.0" height="31.8" fill="url(#pgrid)"/>
<rect x="308.7" y="388.2" width="53.0" height="31.8" fill="url(#pgrid)"/>
<rect x="365.9" y="284.8" width="53.0" height="31.8" fill="url(#pgrid)"/>
<rect x="365.9" y="319.6" width="53.0" height="31.8" fill="url(#pgrid)"/>
<rect x="365.9" y="354.0" width="53.0" height="31.8" fill="url(#pgrid)"/>
<rect x="365.9" y="388.2" width="53.0" height="31.8" fill="url(#pgrid)"/>
<rect x="423.1" y="284.8" width="53.0" height="31.8" fill="url(#pgrid)"/>
<rect x="423.1" y="319.6" width="53.0" height="31.8" fill="url(#pgrid)"/>
<rect x="423.1" y="354.0" width="53.0" height="31.8" fill="url(#pgrid)"/>
<rect x="423.1" y="388.2" width="53.0" height="31.8" fill="url(#pgrid)"/>
<rect x="480.3" y="284.8" width="53.0" height="31.8" fill="url(#pgrid)"/>
<rect x="480.3" y="319.6" width="53.0" height="31.8" fill="url(#pgrid)"/>
<rect x="480.3" y="354.0" width="53.0" height="31.8" fill="url(#pgrid)"/>
<rect x="480.3" y="388.2" width="53.0" height="31.8" fill="url(#pgrid)"/>
<rect x="537.5" y="284.8" width="53.0" height="31.8" fill="url(#pgrid)"/>
<rect x="537.5" y="319.6" width="53.0" height="31.8" fill="url(#pgrid)"/>
<rect x="537.5" y="354.0" width="53.0" height="31.8" fill="url(#pgrid)"/>
<rect x="537.5" y="388.2" width="53.0" height="31.8" fill="url(#pgrid)"/>
<rect x="250" y="318.0" width="341" height="1.6" fill="#e4a282"/>
<rect x="250" y="386.4" width="341" height="1.6" fill="#e4a282"/>
<rect x="363.2" y="283.5" width="1.8" height="137" fill="#dba080" opacity="0.9"/>
<rect x="591" y="284" width="344" height="136" fill="url(#navy)"/>
<rect x="593" y="386.5" width="57" height="33.5" fill="#4a2c22" opacity="0.78"/>
<rect x="591" y="317.5" width="344" height="1.4" fill="#d8784a"/>
<rect x="591" y="385.5" width="344" height="1.4" fill="#d8784a"/>
<rect x="762.7" y="284" width="1.4" height="136" fill="#d8784a"/>
<polygon points="594.6,245.8 608.2,259.8 601.8,259.8 601.8,273 586.8,273 586.8,259.8 580.8,259.8" fill="#a4a09c"/>
<polygon points="594.6,464 608,451.3 601.9,451.3 601.9,437.7 587.4,437.7 587.4,451.3 580.7,451.3" fill="#a4a09c"/>
<polygon points="207.6,355 221,342.4 221,348.3 235,348.3 235,361.7 221,361.7 221,368.4" fill="#a4a09c"/>
<polygon points="981,355.5 968,343 968,349 955,349 955,362 968,362 968,368" fill="#a4a09c"/>
<polygon points="938.2,147 946,155.6 942,155.6 942,164 934.4,164 934.4,155.6 930.4,155.6" fill="rgba(225,240,215,0.42)"/>
<polygon points="938.2,201.3 946,193 942,193 942,185 934.4,185 934.4,193 930.4,193" fill="rgba(225,240,215,0.42)"/>
<polygon points="914,173.2 922,165 922,169 928,169 928,177.5 922,177.5 922,181.5" fill="rgba(225,240,215,0.42)"/>
<polygon points="963.7,173.2 955.7,165 955.7,169 948.7,169 948.7,177.5 955.7,177.5 955.7,181.5" fill="rgba(225,240,215,0.42)"/>
<circle cx="898.8" cy="174.3" r="4.8" fill="rgba(210,225,240,0.35)" stroke="rgba(200,220,240,0.55)" stroke-width="1.2"/>
<g font-family="Liberation Sans" fill="#fff">
<text stroke="#fff" stroke-width="0.2" x="582" y="291" font-size="10" textLength="24.6" lengthAdjust="spacingAndGlyphs">Ridge</text>
<text stroke="#fff" stroke-width="0.2" x="560" y="359.5" font-size="10" textLength="68" lengthAdjust="spacingAndGlyphs">Roof View West</text>
<text stroke="#fff" stroke-width="0.2" x="581.8" y="429.5" font-size="10" textLength="25.2" lengthAdjust="spacingAndGlyphs">Eaves</text>
<text x="624.8" y="390.8" font-size="25.8" textLength="257.7" lengthAdjust="spacingAndGlyphs" fill="#f0f0f0" stroke="#0e3a7e" stroke-width="0.45" stroke-opacity="0.8">24 Modules (6,24 kWp)</text>
<text transform="translate(250.3,387.5) rotate(-90)" font-size="9.8" stroke="#fff" stroke-width="0.25" textLength="73.5" lengthAdjust="spacingAndGlyphs">Gable End North</text>
<text transform="translate(937.8,317.7) rotate(90)" font-size="9.8" stroke="#fff" stroke-width="0.25" textLength="73.5" lengthAdjust="spacingAndGlyphs">Gable End South</text>
</g>
</svg>
<!-- context menu -->
<div class="a" style="left:639px;top:411.5px;width:208.5px;height:130px;background:#e9eef6;border:1px solid #c9d3e0;border-right-color:#d0d8e4"></div>
<div class="a" style="left:662px;top:433.7px;width:182px;height:1px;background:#b7cbe6"></div>
<div class="a" style="left:662px;top:434.7px;width:182px;height:1px;background:#fafcfe"></div>
<div class="a" style="left:662px;top:494px;width:182px;height:1px;background:#b7cbe6"></div>
<div class="a" style="left:662px;top:495px;width:182px;height:1px;background:#fafcfe"></div>
<div class="a" style="left:641px;top:516.5px;width:205px;height:19px;background:#f0f4f9;border:1px solid #d6dfea"></div>
<svg class="a" style="left:630px;top:400px" width="230" height="137" viewBox="630 400 230 137" font-family="Liberation Sans" font-size="9.6" fill="#1a1a22" stroke="#1a1a22" stroke-width="0.28">
 <text x="666.4" y="426.7" textLength="62.7" lengthAdjust="spacingAndGlyphs">Back to Terrain</text>
 <text x="666.4" y="448.5" textLength="138.4" lengthAdjust="spacingAndGlyphs">Select unconfigured PV Modules</text>
 <text x="666.6" y="467.3" textLength="156.5" lengthAdjust="spacingAndGlyphs" fill="#a6abb3" stroke="#a6abb3">Mark lower modules of module rows</text>
 <text x="666.6" y="486.9" textLength="34.3" lengthAdjust="spacingAndGlyphs">Remove</text>
 <text x="666.6" y="508.6" textLength="42.4" lengthAdjust="spacingAndGlyphs">Configure</text>
 <text x="666.6" y="528.2" textLength="154.6" lengthAdjust="spacingAndGlyphs">Add to 'Define Module Areas' Dialog</text>
</svg>
<svg class="a" style="left:630px;top:400px" width="230" height="137" viewBox="630 400 230 137">
 <polygon points="643,422 656,419.7 656,429.5 643,429.5" fill="#7cc45a"/>
 <polygon points="643,422 656,419.7 656,423 643,425" fill="#4a3a8a"/>
 <polygon points="643,426 656,424 656,429.5 643,429.5" fill="#9ad27a"/>
 <polygon points="643,440 646,438.5 650,446 647,447.5" fill="#3a5aa6"/>
 <polygon points="647,439 650,438 654,445 651,446" fill="#3a5aa6"/>
 <path d="M650.5 445 L650.5 452 L652.3 450.5 L653.5 453 L654.5 452.5 L653.3 450 L655.5 450 Z" fill="#fff" stroke="#8a96a6" stroke-width="0.5"/>
 <path d="M644 490.5 L649 486" stroke="#555" stroke-width="0.9"/>
 <rect x="643" y="490.5" width="13" height="0.8" fill="#a8b0b8"/>
 <polygon points="647,484.5 651.5,481.5 653,486.5 650,488" fill="#c81e28"/>
 <circle cx="653" cy="481.5" r="3" fill="#e8303a"/>
 <circle cx="652.2" cy="480.6" r="1" fill="#f89098"/>
 <rect x="643.5" y="503" width="3" height="3" fill="#f06a2a"/>
 <rect x="650.5" y="500" width="3.5" height="3" fill="none" stroke="#3a6ac0" stroke-width="0.9"/>
 <rect x="650.5" y="506" width="3.5" height="3" fill="none" stroke="#3a6ac0" stroke-width="0.9"/>
 <path d="M646.5 504.5 L649 504.5 L649 501.5 L650.5 501.5 M649 504.5 L649 507.5 L650.5 507.5" stroke="#888" stroke-width="0.7" fill="none"/>
 <rect x="645" y="520" width="10" height="11" fill="#d8b078" stroke="#a88050" stroke-width="0.6"/>
 <rect x="647.5" y="519" width="5" height="2.5" fill="#8a7a6a"/>
 <path d="M643 526 L650 526 M648 524 L650.5 526 L648 528" stroke="#2a5ac0" stroke-width="1.5" fill="none"/>
 <rect x="637.3" y="516" width="211" height="23" fill="none" stroke="#e8101c" stroke-width="3.5"/>
 <text x="831.1" y="511.1" font-size="15.5" fill="#e8101c" stroke="#e8101c" stroke-width="0.8" font-family="Liberation Sans" textLength="11" lengthAdjust="spacingAndGlyphs">1.</text>
</svg>
</body></html>
